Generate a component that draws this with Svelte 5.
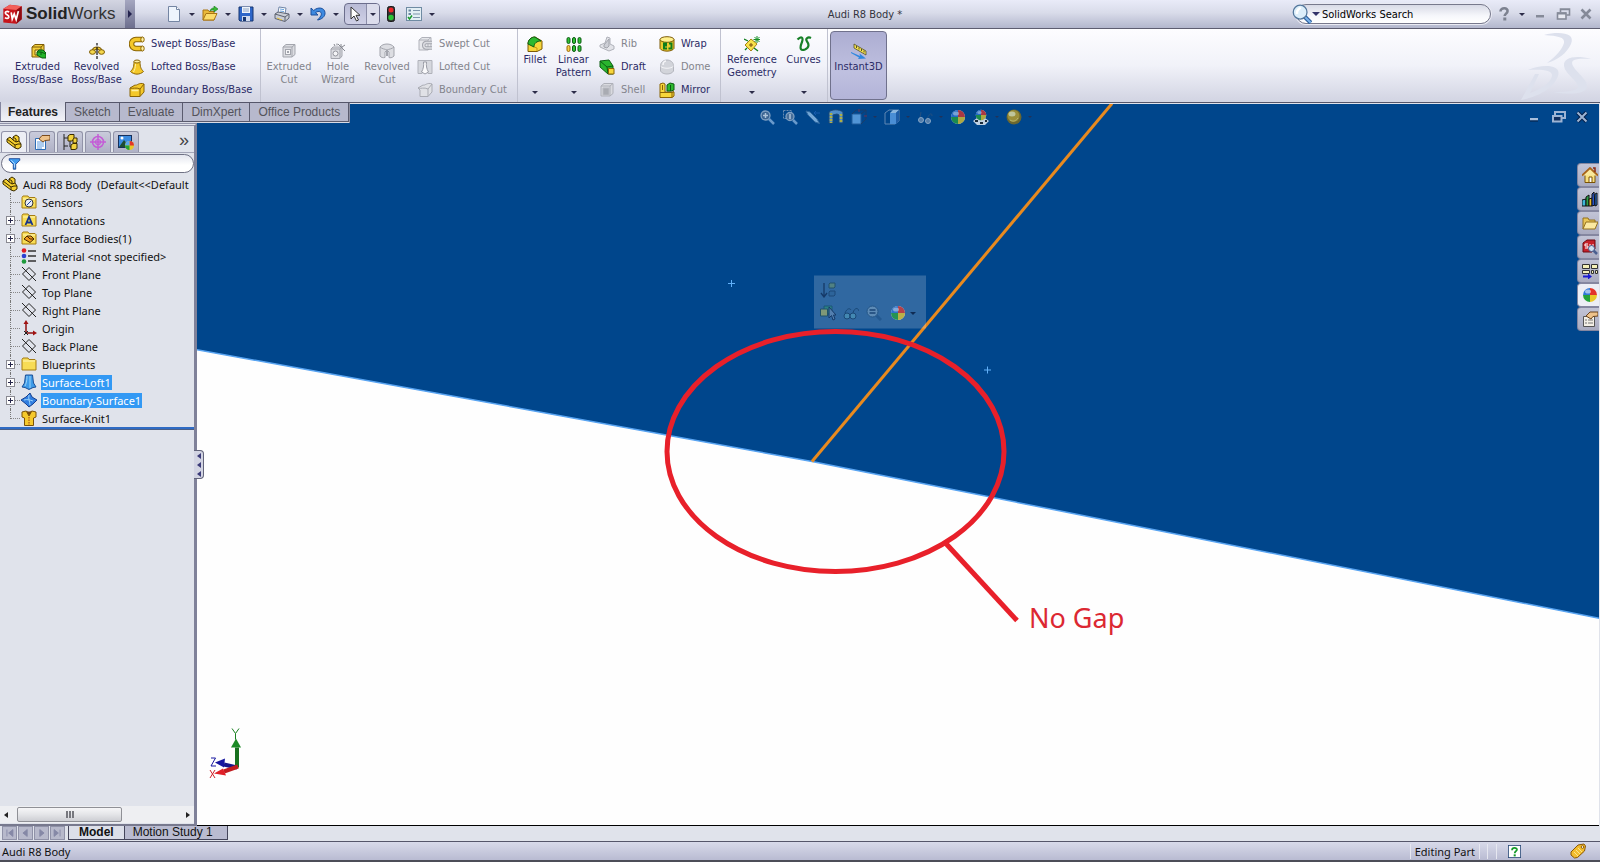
<script>
  const box = (f, s, g = '') =>
    `<path d="M2 4l3-2.500h9v10l-3 2.500H2z" fill="${f}" stroke="${s}"/><path d="M2 4h9v10M11 4l3-2.500" fill="none" stroke="${s}"/>${g}`;
  const ball =
    '<circle cx="8" cy="8" r="7" fill="#fff"/><path d="M8 8V1A7 7 0 0 0 1 8z" fill="#2f76d8"/><path d="M8 8V1A7 7 0 0 1 15 8z" fill="#e2342c"/><path d="M8 8H1A7 7 0 0 0 8 15z" fill="#23a23a"/><path d="M8 8H15A7 7 0 0 1 8 15z" fill="#e8c92a"/><ellipse cx="6" cy="4.500" rx="3" ry="2" fill="#fff" opacity=".55"/>';
  const folder =
    '<path d="M1 3.500L2 2h5l1 1.500h6l1 1V14H1z" fill="#f7dc55" stroke="#a57c12"/><path d="M2 5h12" stroke="#fff6b8"/>';
  const part =
    '<path d="M1 5l3-2 3 3V3l3-2 3 2v4l2 3v3l-3 2-3-1-8-6z" fill="#f5cf2e" stroke="#3a2c00"/><path d="M1 5l8 6 3-1 3 0M7 6l3 2 3-1M9 11v3M7 3l3 2v3" fill="none" stroke="#3a2c00"/>';
  const plane =
    '<path d="M1 1l14 14M8 1.500l6.500 6.500L8 14.500 1.500 8z" fill="none" stroke="#222"/>';

  const icons = {
    logo: '<path d="M1 4l5-3 9 1v10l-4 3.500-10-1z" fill="#c6141b"/><path d="M1 4l5-3 9 1-4 3z" fill="#f2605b"/><path d="M11 5l4-3v10l-4 3.500z" fill="#8e0b12"/><path d="M5.500 6.500c-2-1-3.500 0-2.700 1.200.6 1 2.700 1.300 2.400 2.800-.3 1.200-2 1-3 .3M7 6.800l.8 5L9.300 8l1.500 4.200 1.700-6.400" fill="none" stroke="#fff" stroke-width="1.300"/>',
    new: '<path d="M2.500.500h8l3 3v12h-11z" fill="#eef4fd" stroke="#7485a3"/><path d="M10.500.500v3h3" fill="#fff" stroke="#7485a3"/>',
    open: '<path d="M1 14V4h5l1 1.500h5V14z" fill="#e9b93a" stroke="#a97512"/><path d="M1 14l3-6.500h11L12 14z" fill="#fbdc6b" stroke="#a97512"/><path d="M8 5c1-3 3-3 4-3V0l4 3-4 3V4c-2 0-3 0-4 1z" fill="#38b835" stroke="#16791a" stroke-width=".6"/>',
    save: '<path d="M1 1h14v14H2l-1-1z" fill="#2d66c9" stroke="#17356f"/><path d="M4 1h8v6H4z" fill="#eef3fb"/><path d="M5 3h6M5 5h6" stroke="#8fa4c4"/><path d="M4 10h8v5H4z" fill="#cfdaee"/><path d="M5 11h3v4H5z" fill="#17356f"/>',
    print: '<path d="M4 7l1-6 7 1-1 6z" fill="#fff" stroke="#6f86a8"/><path d="M6 3l4 .6M6 5l4 .6" stroke="#6aa3de"/><path d="M1 8l3-2 11 2v4l-4 3.500-10-3z" fill="#c9cdd6" stroke="#5d6270"/><path d="M1 8l10 3 4-3M11 11v4" fill="none" stroke="#5d6270"/><path d="M3 12l5 2" stroke="#e8c23a"/>',
    undo: '<path d="M1 2v7h7L5.500 6.700C9 4 12.500 6 11 9.500c-.7 1.800-2 3-3.500 4.500 4-.5 8-3.500 7.500-7.500C14.500 1.500 8 .5 3.700 4.500z" fill="#3e8ae0" stroke="#1c4f9c"/>',
    cursor: '<path d="M4 1v12l3-3 2.500 5 2-1L9 9.300h4z" fill="#fff" stroke="#333"/>',
    traffic: '<rect x="4.500" y=".500" width="7" height="15" rx="2" fill="#333" stroke="#1b1b1b"/><circle cx="8" cy="4" r="2.500" fill="#f0262a"/><circle cx="8" cy="11.500" r="2.700" fill="#2bc434"/>',
    options: '<rect x=".500" y="1.500" width="15" height="13" fill="#e3eef4" stroke="#6f8ba3"/><path d="M7 4.500h7M7 8h7M7 11.500h7" stroke="#7d95ab"/><path d="M2.500 4.500h2.500M2.500 8h2.500" stroke="#6a86a0" stroke-width="2"/><path d="M2 11l1.500 2L6 9.500" fill="none" stroke="#1a9a2c" stroke-width="1.500"/>',
    help: '<path d="M4.500 5.500C4.500 1 12.500 1.500 11.500 5.500c-.4 2-2.800 2.500-2.800 4.500" fill="none" stroke="#7d8290" stroke-width="2.600"/><path d="M7.300 11.500h3v3h-3z" fill="#7d8290"/>',
    min: '<path d="M4 9h8v2.500H4z" fill="#858a98"/>',
    restore: '<path d="M5.500 6V3h9v6h-3M5 3.500h10" fill="none" stroke="#858a98" stroke-width="1.600"/><rect x="2.500" y="7" width="8.500" height="6" fill="#e8eaf2" stroke="#858a98" stroke-width="1.600"/><path d="M2 7.500h9" stroke="#858a98" stroke-width="2"/>',
    close: '<path d="M3.500 3.500l9 9M12.500 3.500l-9 9" stroke="#858a98" stroke-width="2.600"/>',
    vmin: '<path d="M4 9h8v2.500H4z" fill="#a9bedb"/><path d="M4 12h8" stroke="#071e42"/>',
    vrestore: '<path d="M5 6V3h10v6h-3" fill="none" stroke="#9db4d4" stroke-width="2"/><rect x="3" y="7" width="8.500" height="5.500" fill="#12305f" stroke="#9db4d4" stroke-width="2"/>',
    vclose: '<path d="M3.500 3.500l9 9M12.500 3.500l-9 9" stroke="#06204a" stroke-width="4"/><path d="M3.500 3.500l9 9M12.500 3.500l-9 9" stroke="#9db4d4" stroke-width="2"/>',
    mag: '<path d="M10 10l5 5" stroke="#2c5f9e" stroke-width="3.500"/><path d="M10 10l5 5" stroke="#7db4ea" stroke-width="1.500"/><circle cx="6.500" cy="6.500" r="5.500" fill="#dceefa" stroke="#53779c"/><path d="M4 8c-.5-3 1-4 3-5" stroke="#fff" stroke-width="2" fill="none"/>',

    extBoss: box('#f3cf3c', '#7c5b06', '<path d="M5 7h5v5H5z" fill="#fff2a0" stroke="#7c5b06"/><path d="M7 9l2-2h4l3 3v5h-4l-5-3z" fill="#22b428" stroke="#0c5c12"/><path d="M7 9h4l5 2M11 9v3" stroke="#0c5c12" fill="none"/>'),
    revBoss: '<path d="M8 0v2.500M8 13v3" stroke="#111" stroke-width="1.200"/><path d="M4 8C5 4 11 4 12 8" stroke="#7c5b06" stroke-width="3" fill="none"/><path d="M4 8C5 4 11 4 12 8" stroke="#f3cf3c" stroke-width="1.200" fill="none"/><ellipse cx="3.500" cy="9" rx="3" ry="2.300" fill="#f5d74c" stroke="#7c5b06"/><ellipse cx="12.500" cy="9" rx="3" ry="2.300" fill="#f5d74c" stroke="#7c5b06"/><path d="M8 4v8" stroke="#111" stroke-width="1.200"/>',
    swept: '<path d="M13.500 3.500H7a4.500 4.500 0 0 0 0 9h6.500" fill="none" stroke="#8a6405" stroke-width="5.500"/><path d="M13.500 3.500H7a4.500 4.500 0 0 0 0 9h6.500" fill="none" stroke="#f4c82a" stroke-width="3.500"/><ellipse cx="13.500" cy="3.500" rx="1.700" ry="2.500" fill="#fff0a0" stroke="#8a6405"/><ellipse cx="13.500" cy="12.500" rx="1.700" ry="2.500" fill="#fff0a0" stroke="#8a6405"/>',
    loft: '<path d="M5 2.500C5 8 4 10 1.500 12.500 5 16 11 16 14.500 12.500 12 10 11 8 11 2.500z" fill="#f4c82a" stroke="#8a6405"/><ellipse cx="8" cy="2.500" rx="3" ry="1.500" fill="#fff0a0" stroke="#8a6405"/><path d="M6.500 5c0 4-1 6-2 8" stroke="#fff0a0" fill="none"/>',
    boundary: '<path d="M1 6l5-3c2 1 4-3 9-1v8l-4 4.500H1z" fill="#f4c82a" stroke="#8a6405"/><path d="M1 6c3 1 6-1 10 1l4-5M11 7v7.500" fill="none" stroke="#8a6405"/><path d="M2.500 8.500h7" stroke="#fff0a0" stroke-width="1.500"/>',
    extCut: box('#dcdde2', '#a3a5ad', '<rect x="4.500" y="6.500" width="5" height="5" fill="#f6f6f8" stroke="#a3a5ad"/><path d="M6 8h2v2H6z" fill="#a3a5ad"/>'),
    hole: '<path d="M1 6l2-2h9v9l-2 2.500H1z" fill="#dcdde2" stroke="#a3a5ad"/><path d="M1 6h9v9M10 6l2-2" fill="none" stroke="#a3a5ad"/><circle cx="5.500" cy="10.500" r="2.500" fill="#f4f4f6" stroke="#93959d"/><path d="M8 1l7 7M11 1v3M15 2l-3 2M4 1l1 2M7 .5v2" stroke="#85878f"/>',
    revCut: '<path d="M1 4c3-4 11-4 14 0v9c-2 2-4 2-5 1.500V9L8 7 6 9v5.500c-2 .5-4 0-5-1.500z" fill="#dcdde2" stroke="#a3a5ad"/><path d="M1 4c2 2 5 2 7 3 2-1 5-1 7-3" fill="none" stroke="#a3a5ad"/><path d="M8 7v6" stroke="#a3a5ad" stroke-width="2"/>',
    sweptCut: box('#e6e7eb', '#b0b2ba', '<path d="M15 6.500H9a2.800 2.800 0 0 0 0 5.500h6" fill="none" stroke="#a3a5ad" stroke-width="3.500"/><path d="M15 6.500H9a2.800 2.800 0 0 0 0 5.500h6" fill="none" stroke="#dcdde2" stroke-width="1.500"/>'),
    loftCut: '<path d="M1 1.500h14v13h-4c-1-2-2-5-3-9-1 4-2 7-3 9H1z" fill="#d6d8de" stroke="#b0b2ba"/><path d="M4.500 13c2-3 2.500-7 2-10h3c-.5 3 0 7 2 10L8 15z" fill="#fafafc" stroke="#9b9da6"/>',
    boundCut: '<path d="M1 6l5-3c2 1 4-3 9-1v8l-4 4.500H3V8z" fill="#e0e1e6" stroke="#a9abb3"/><path d="M1 6c3 1 6-1 10 1l4-5M11 7v7.500" fill="none" stroke="#a9abb3"/>',
    fillet: '<path d="M1 8c0-4 3-7 7-7l7 4v8l-5 2.500H1z" fill="#f6d63b" stroke="#7c5b06"/><path d="M1 8c0-4 3-7 7-7l6 4c-4 0-7 2-7 6z" fill="#2cb92f" stroke="#0c5c12"/><path d="M7 11l3 1v3" stroke="#c79a10" fill="none"/>',
    pattern: [1, 6.5, 12].map((x) => `<rect x="${x}" y="1.500" width="3" height="6" rx="1.500" fill="#2fc135" stroke="#0c5c12"/><rect x="${x}" y="9.500" width="3" height="6" rx="1.500" fill="${x === 1 ? '#f5cf4a' : '#2fc135'}" stroke="${x === 1 ? '#9c6a08' : '#0c5c12'}"/>`).join(''),
    rib: '<path d="M1 9l5-2 2-6 3 1v6l4 2v3l-5 2-9-4z" fill="#e2e3e8" stroke="#b0b2ba"/><path d="M5 11V9l5-6v7l-2 2z" fill="#cdcfd6" stroke="#a3a5ad"/>',
    draft: '<path d="M1 2l9-1 4 6v8H9L1 8z" fill="#29b52d" stroke="#0c5c12"/><path d="M1 2l7 6 6-1M8 8l1 7" stroke="#0c5c12" fill="none"/><path d="M9.500 9.500h5.500V15H9.500z" fill="#f6d63b" stroke="#8a6405"/>',
    shell: box('#d9dadf', '#aeb0b8', '<path d="M4 6h6v7H4z" fill="#a9abb2" stroke="#b9bbc2"/>'),
    wrap: '<path d="M1 3.500v9c2 3.500 12 3.500 14 0v-9z" fill="#eccb2f" stroke="#7c5b06"/><ellipse cx="8" cy="3.500" rx="7" ry="2.800" fill="#fff08c" stroke="#7c5b06"/><path d="M4 7.500h3v2H5v3h3M10 7.500h2.500v5H9.500" stroke="#0f7d1c" stroke-width="2" fill="none"/>',
    dome: '<path d="M1.500 7C1.500-1 14.500-1 14.500 7v5c-2 4-11 4-13 0z" fill="#d2d4da" stroke="#b4b6be"/><path d="M1.500 7c2 3 11 3 13 0" fill="none" stroke="#f5f5f8"/><path d="M4 6c0-3 2-4 3-4" stroke="#f5f5f8" stroke-width="1.500" fill="none"/>',
    mirror: '<path d="M1 2l3-1 2 1v8h9v4l-2 1.500H1z" fill="#f6d63b" stroke="#8a6405"/><path d="M8 3l3-2 4 1v6l-3 1H8z" fill="#2cb92f" stroke="#0c5c12"/><path d="M1 10.500h12l2-1M13 10.500v5M3.500 3v5" stroke="#8a6405" fill="none"/><path d="M11.500 3v6" stroke="#0c5c12"/>',
    refGeo: '<path d="M1 9l6-6 6 5-6 7z" fill="#f8e24a" stroke="#a98212"/><path d="M5 9h4M7 7v4" stroke="#7a4c10"/><path d="M0 3l4 2M10 12l4 3M1 14l2-2" stroke="#0f7d1c" stroke-width="1.300"/><path d="M13 0v7M9.500 3.500h6.500M10.500 1l5 5M15.500 1l-5 5" stroke="#169025"/>',
    curves: '<path d="M1.500 3.500c4-4 6-2 4.500 2.500-3 7-1 9 3 7.500 4.500-2 4-5.500 2-8C9 2.500 12 .5 15 2" fill="none" stroke="#178027" stroke-width="2.200"/>',
    instant: '<path d="M3 1l12 7v4L3 5z" fill="#f6e34c" stroke="#55502a" stroke-width=".8"/><path d="M5.500 3v2M8 4.500v2M10.500 6v2M13 7.500v2" stroke="#55502a"/><path d="M0 9l9 4-.5-2.500 6.500 5-8 .5 1-1.500L0 10z" fill="#2f87e0"/>',

    part,
    prop: '<path d="M1.500 4.500h10v11h-10z" fill="#fff" stroke="#2d6cb5"/><path d="M3 8h7M3 10h7M3 12h7M3 14h5" stroke="#5c9ae0"/><path d="M5 5l3-3.500h8V6l-5 .5-2 1.500z" fill="#eec28a" stroke="#7a4b1e"/>',
    config: '<path d="M2 0v16M2 4h4M2 12h4M8 5v8h2" fill="none" stroke="#222"/><path d="M6 2l2-1.500h4v5L10 7H6z" fill="#f2d23e" stroke="#3a2c00"/><path d="M11 5l1.500-1H15v4l-1 1h-3z" fill="#f2d23e" stroke="#3a2c00"/><path d="M9 11l2-1.500h4v5l-2 1H9z" fill="#f2d23e" stroke="#3a2c00"/>',
    target: '<circle cx="8" cy="8" r="5.500" fill="none" stroke="#c45cd6" stroke-width="1.500"/><circle cx="8" cy="8" r="2.500" fill="none" stroke="#c45cd6" stroke-width="1.200"/><path d="M8 0v16M0 8h16" stroke="#c45cd6" stroke-width="1.500"/>',
    display: '<rect x=".500" y="1.500" width="13" height="12" fill="#3b8be0" stroke="#17305c"/><path d="M1 13l5-7 6 7z" fill="#1e4d33"/><circle cx="4" cy="4" r="1.500" fill="#fff"/><circle cx="11.500" cy="11.500" r="4.500" fill="#e8c92a"/><path d="M11.500 11.500V7a4.500 4.500 0 0 1 4.500 4.500z" fill="#e2342c"/><path d="M11.500 11.500V7A4.500 4.500 0 0 0 7 11.500z" fill="#58a7f0"/><path d="M11.500 11.500V16A4.500 4.500 0 0 1 7 11.500z" fill="#23a23a"/>',
    filter: '<path d="M1.500 2h13v2l-5 5v6h-3V9l-5-5z" fill="#3f9bf0" stroke="#123f8e"/><path d="M4 4l4 4v5" stroke="#c8e6ff" fill="none"/>',
    sensor: folder + '<circle cx="8" cy="9" r="4" fill="#e9eef8" stroke="#333"/><path d="M6 11l4-4" stroke="#1c3ea0"/>',
    annot: folder + '<path d="M4.500 13L8 5l3.500 8M5.800 10.500h4.500" stroke="#16348c" stroke-width="1.800" fill="none"/>',
    surf: folder + '<path d="M3 9l3-3h4l3 3-4 3.500z" fill="#f09a1e" stroke="#4a2a00"/><path d="M6 6l3 3 4 0" stroke="#4a2a00" fill="none"/>',
    material: '<circle cx="3" cy="2.500" r="2.300" fill="#e01c24"/><circle cx="3" cy="8" r="2.300" fill="#2c3fd0"/><circle cx="3" cy="13.500" r="2.300" fill="#1e9a3c"/><path d="M7 3h8M7 8h8M7 13h8" stroke="#333" stroke-width="1.500"/>',
    plane,
    origin: '<path d="M5 13V3M5 13h8" stroke="#8f1010" stroke-width="1.500"/><path d="M5 0l2.500 4h-5zM16 13l-4-2.500v5z" fill="#a01212"/><path d="M3 11l4 4M7 11l-4 4" stroke="#222"/>',
    folder,
    loftS: '<path d="M4.500 1h7l1 8 2.500 4-3 .5-4 2-4-2-3-.5L3.500 9z" fill="#3e9be8" stroke="#1b4f96"/><path d="M6 2c0 5-1 8-2 10M9 2v12" stroke="#9bd4fa" fill="none"/>',
    boundS: '<path d="M0 8l5-3 4-4 2 4 5 3-4 4-4 3-3-3z" fill="#2f7de0" stroke="#17408e"/><path d="M3 8c3-1 6 0 9 1M8 3c-1 4 1 7 1 10" stroke="#9bd4fa" fill="none"/>',
    knit: '<path d="M1 2l4-1 3 2 3-2 4 1v5l-2.500 1v7.500h-9V8L1 7z" fill="#f5c92c" stroke="#7a5206"/><path d="M5.500 1.500L8 6l2.500-4.500" fill="#7a4a10" stroke="#7a5206"/><path d="M8 7v8" stroke="#a03a10" stroke-dasharray="1.500 1"/>',

    hMag: '<path d="M10 10l5 5" stroke="#8db6e0" stroke-width="2.500"/><circle cx="6.500" cy="6.500" r="4.500" fill="#4f6f94" stroke="#a9bdd4" stroke-width="1.300"/><path d="M4 6.500h5M6.500 4v5" stroke="#e6edf5" stroke-width="1.500"/>',
    hArea: '<path d="M1.500 1.500h8v8h-8z" fill="none" stroke="#8aa3c0" stroke-dasharray="2 1"/><path d="M11 11l4 4" stroke="#8db6e0" stroke-width="2.500"/><circle cx="8" cy="7.500" r="4" fill="#5f7c9e" stroke="#a9bdd4" stroke-width="1.300"/><path d="M8 5v5" stroke="#e6edf5" stroke-width="1.500"/>',
    hPrev: '<path d="M1 2l4 1 7 7 2.500 4.500L10 13 3 6z" fill="#9cc9f0" stroke="#3f74a8"/><path d="M9 4h6M9 4l2-2M9 4l2 2" stroke="#1f62b8"/>',
    hSect: '<path d="M1 3c3-3 10-3 14 0v11h-4V6L9 5 5 6v8H1z" fill="#6aa5de" stroke="#24496f"/><path d="M3 4v10M13 5v9" stroke="#e8d22c" stroke-width="2.500" stroke-dasharray="2 1"/>',
    hView: '<path d="M1 5h9v10H1z" fill="#6db0ef" stroke="#2a62a0"/><path d="M1 5l4-4h10v9l-5 5M10 5l5-4" fill="none" stroke="#253a5c"/><path d="M8 0v3M13 7h3" stroke="#8c2a4a"/>',
    hDisp: '<path d="M1 4l4-3h10v11l-4 3H1z" fill="none" stroke="#7f9cc0"/><path d="M6 4h6v11H6z" fill="#63a7ee"/><path d="M6 4l3-3h6l-3 3z" fill="#b9dcfa"/><path d="M12 4l3-3v11l-3 3z" fill="#2a67b2"/>',
    hGlass: '<path d="M3 9l1-6M10 10c2-5 5-7 5-3" fill="none" stroke="#33557d"/><circle cx="4" cy="11" r="2.500" fill="#6f8fb4" stroke="#b2c6dc"/><circle cx="11" cy="12" r="2.500" fill="#6f8fb4" stroke="#b2c6dc"/>',
    ball,
    hScene: '<path d="M0 12l4-3h8l4 3-4 4H4z" fill="#fff"/><path d="M2 11h3v2H2zM7 13h3v2H7zM12 11h2v2h-2z" fill="#222"/><g transform="translate(2 0) scale(.75)">' + ball + '</g>',
    hGold: '<circle cx="8" cy="8" r="7.500" fill="#8f7312"/><circle cx="7.500" cy="7" r="6" fill="#cfa71e"/><ellipse cx="6" cy="5" rx="3.500" ry="2.500" fill="#fff0a0"/><path d="M4 11c3 2 6 1 8-2" stroke="#f2d96a" fill="none"/>',
    sort: '<path d="M4 1v13M1 11l3 4 3-4" fill="none" stroke="#0d2a55" stroke-width="1.300"/><path d="M9 2l1-1h5v4l-1 1H9z" fill="#5c8a78" stroke="#1f4a5c"/><path d="M9 10l1-1h5v4l-1 1H9z" fill="#2c6398" stroke="#173f6c"/>',
    pick: '<path d="M4 1h8v8H4z" fill="#2a8a78" stroke="#14506a"/><path d="M.5 4h7v7h-7z" fill="#9aa86a" stroke="#1a4a5a"/><path d="M9 2v11l2.500-2.500L13 15l2-1-1.500-4H16z" fill="#5f87b4" stroke="#0d2a55"/>',
    glasses: '<circle cx="4" cy="11" r="3" fill="#4a93b8" stroke="#133f6a"/><circle cx="10" cy="11" r="3" fill="#4a93b8" stroke="#133f6a"/><path d="M2 8c2-5 5-5 6-3M10 8c1-5 5-6 6-2" fill="none" stroke="#133f6a"/>',
    magSel: '<path d="M10 10l5 5" stroke="#1f548c" stroke-width="3"/><circle cx="6.500" cy="6.500" r="5.500" fill="#6c97bd" stroke="#1f4f80"/><path d="M3.500 5h6M3.500 8h6" stroke="#133a68" stroke-width="1.300"/>',

    home: '<path d="M3 8v7.500h10V8" fill="#f7df7c" stroke="#7a5206"/><path d="M0 8.500L8 1l8 7.500" fill="#f9e89c" stroke="#a8641a" stroke-width="1.800"/><path d="M11 1h2v4" fill="none" stroke="#8a2a12" stroke-width="1.500"/><path d="M7 10h3v5.500H7z" fill="#fff" stroke="#7a5206"/>',
    library: '<path d="M0 9l4-1v7H0z" fill="#3fb6d8" stroke="#111"/><path d="M4 6l3-2v11H4z" fill="#2fa044" stroke="#111"/><path d="M7 8l3-1v8H7z" fill="#e8b92a" stroke="#111"/><path d="M10 3l2-2 1 13-3 1z" fill="#2a54c8" stroke="#111"/><path d="M13 3l2-1v12l-2 1z" fill="#2f7de0" stroke="#111"/>',
    openF: '<path d="M1 14V3h5l1 2h6v2" fill="#e9c657" stroke="#94701c"/><path d="M1 14l3-7h12l-3 7z" fill="#fbe9a0" stroke="#94701c"/>',
    swSearch: '<path d="M1 4l4-3h8v9l-3 3H1z" fill="#c6202a" stroke="#6d0b12"/><path d="M3 9h3V7H3V5h3M8 5v4h3V5" fill="none" stroke="#fff"/><path d="M11 11l4 4" stroke="#4a5f90" stroke-width="2.500"/><circle cx="9.500" cy="9.500" r="3" fill="#cfe0f2" stroke="#4a5f90"/>',
    palette: '<path d="M.5 1.500h7v4h-7zM9.500 1.500h6v4h-6zM.5 7.500h7v3h-7zM9.500 7.500h2v3h-2zM13.500 7.500h2v3h-2z" fill="#f4f0b8" stroke="#333"/><path d="M1 13.500h6" stroke="#1a1ad0" stroke-width="2"/><path d="M6 10.500l4 3-4 3z" fill="#1a1ad0"/>',
    custom: '<path d="M1.500 5.500h11v10h-11z" fill="#f3efe6" stroke="#555"/><path d="M3 9h2M6 9h5M3 12h2M6 12h5" stroke="#777"/><path d="M4 5l4-4h8v4l-5 .5L9 8z" fill="#eec28a" stroke="#6b431c"/>',
    qhelp: '<rect x=".500" y=".500" width="15" height="15" fill="#fff" stroke="#2a4a78"/><path d="M5 6.500C5 2.500 11.500 3 11 6c-.3 1.500-2.700 1.800-2.700 4" fill="none" stroke="#149a28" stroke-width="2.200"/><path d="M7 11.500h2.500V14H7z" fill="#149a28"/>',
    tag: '<path d="M1 9l7-7 6-1 1.500 2-1 5-7 6.500-3 .5-3.500-3z" fill="#f3bd2e" stroke="#8a5806"/><circle cx="12.500" cy="4" r="1.300" fill="#fff" stroke="#8a5806"/><path d="M4 9l4 4M6 7l4 4M8 5l4 4" stroke="#fbe58c"/>',
    dss: '<g fill="#dde1ed"><path d="M24 4C40 0 56 2 51 13C47 22 38 29 27 32C36 25 42 19 44 12C45 6 38 5 24 4z"/><path d="M8 39C22 33 42 33 38 45C34 57 18 66 1 69L15 43L19 43L10 62C22 58 31 51 32 45C33 39 22 38 8 39z"/><path d="M71 28C54 27 50 29 53 35C57 42 68 49 67 56C66 63 50 64 33 61C46 61 57 60 58 56C58 50 45 43 44 35C43 26 56 24 71 28z"/></g>'
  };

  const quick = [
    { i: 'new', t: 'New' }, { i: 'open', t: 'Open' }, { i: 'save', t: 'Save' },
    { i: 'print', t: 'Print' }, { i: 'undo', t: 'Undo' }
  ];
  const ribbon = [
    [
      { i: 'extBoss', l: ['Extruded', 'Boss/Base'], w: 59 },
      { i: 'revBoss', l: ['Revolved', 'Boss/Base'], w: 59 },
      { w: 132, rows: [['swept', 'Swept Boss/Base'], ['loft', 'Lofted Boss/Base'], ['boundary', 'Boundary Boss/Base']] }
    ],
    [
      { i: 'extCut', l: ['Extruded', 'Cut'], w: 54, off: true },
      { i: 'hole', l: ['Hole', 'Wizard'], w: 44, off: true },
      { i: 'revCut', l: ['Revolved', 'Cut'], w: 54, off: true },
      { w: 101, rows: [['sweptCut', 'Swept Cut', 1], ['loftCut', 'Lofted Cut', 1], ['boundCut', 'Boundary Cut', 1]] }
    ],
    [
      { i: 'fillet', l: ['Fillet'], w: 32, drop: true },
      { i: 'pattern', l: ['Linear', 'Pattern'], w: 45, drop: true },
      { w: 60, rows: [['rib', 'Rib', 1], ['draft', 'Draft'], ['shell', 'Shell', 1]] },
      { w: 62, rows: [['wrap', 'Wrap'], ['dome', 'Dome', 1], ['mirror', 'Mirror']] }
    ],
    [
      { i: 'refGeo', l: ['Reference', 'Geometry'], w: 60, drop: true },
      { i: 'curves', l: ['Curves'], w: 43, drop: true }
    ]
  ];
  const tabs = ['Features', 'Sketch', 'Evaluate', 'DimXpert', 'Office Products'];
  const panelTabs = [['part', 'FeatureManager'], ['prop', 'PropertyManager'], ['config', 'ConfigurationManager'], ['target', 'DimXpertManager'], ['display', 'DisplayManager']];
  const tree = [
    { i: 'sensor', t: 'Sensors' }, { i: 'annot', t: 'Annotations', plus: true },
    { i: 'surf', t: 'Surface Bodies(1)', plus: true }, { i: 'material', t: 'Material <not specified>' },
    { i: 'plane', t: 'Front Plane' }, { i: 'plane', t: 'Top Plane' }, { i: 'plane', t: 'Right Plane' },
    { i: 'origin', t: 'Origin' }, { i: 'plane', t: 'Back Plane' },
    { i: 'folder', t: 'Blueprints', plus: true }, { i: 'loftS', t: 'Surface-Loft1', plus: true, sel: true },
    { i: 'boundS', t: 'Boundary-Surface1', plus: true, sel: true }, { i: 'knit', t: 'Surface-Knit1' }
  ];
  const hud = [['hMag'], ['hArea'], ['hPrev'], ['hSect'], ['hView', 1], ['hDisp', 1], ['hGlass', 1], ['ball'], ['hScene', 1], ['hGold', 1]];
  const pane = ['home', 'library', 'openF', 'swSearch', 'palette', 'ball', 'custom'];
  const nav = ['M4 3v8M11 3L6 7l5 4z', 'M9 3L4 7l5 4z', 'M5 3l5 4-5 4z', 'M10 3v8M3 3l5 4-5 4z'];
  let tab = $state('Features');
</script>

{#snippet icon(name)}
  <svg class="icon" viewBox="0 0 16 16" aria-hidden="true">{@html icons[name]}</svg>
{/snippet}

<div class="app">
  <header class="title">
    <div class="brand">
      <svg class="logo" viewBox="0 0 16 16" aria-hidden="true">{@html icons.logo}</svg>
      <span class="name"><b>Solid</b>Works</span>
    </div>
    <button class="expand" aria-label="Show menus"><i class="tri-r"></i></button>
    <div class="quick">
      {#each quick as q}
        <button class="q" aria-label={q.t}>{@render icon(q.i)}<i class="tri"></i></button>
      {/each}
      <button class="q picked" aria-label="Select">{@render icon('cursor')}<span class="split"><i class="tri"></i></span></button>
      <button class="light" aria-label="Rebuild">{@render icon('traffic')}</button>
      <button class="q" aria-label="Options">{@render icon('options')}<i class="tri"></i></button>
    </div>
    <h1>Audi R8 Body *</h1>
    <label class="search">
      {@render icon('mag')}<i class="tri"></i>
      <input aria-label="SolidWorks Search" value="SolidWorks Search" />
    </label>
    <div class="winbtns">
      <button aria-label="Help">{@render icon('help')}</button>
      <button aria-label="Help menu"><i class="tri"></i></button>
      <button aria-label="Minimize">{@render icon('min')}</button>
      <button aria-label="Restore">{@render icon('restore')}</button>
      <button aria-label="Close">{@render icon('close')}</button>
    </div>
  </header>

  <section class="ribbon">
    {#each ribbon as group}
      <div class="group">
        {#each group as c}
          {#if c.rows}
            <div class="col" style:width="{c.w}px">
              {#each c.rows as [i, t, off]}
                <button class="small" disabled={!!off}>{@render icon(i)}<span>{t}</span></button>
              {/each}
            </div>
          {:else}
            <button class="big" class:drop={c.drop} disabled={c.off} style:width="{c.w}px">
              {@render icon(c.i)}
              <span class="lines">{#each c.l as l}<span>{l}</span>{/each}</span>
              {#if c.drop}<i class="tri"></i>{/if}
            </button>
          {/if}
        {/each}
      </div>
    {/each}
    <button class="big instant">{@render icon('instant')}<span class="lines">Instant3D</span></button>
    <svg class="dss" viewBox="0 0 74 70" aria-hidden="true">{@html icons.dss}</svg>
  </section>

  <main>
    <div class="view">
      <svg class="scene" viewBox="197 104 1402 722" preserveAspectRatio="xMidYMid slice" aria-label="Model view">
        <path d="M0 0H1700V639L1600 619L812 462L196 350L0 314z" fill="#00468c" />
        <path d="M0 314L196 350L812 462L1600 619L1700 639" fill="none" stroke="#58a4f2" stroke-width="1.500" />
        <path d="M1112 104L812 462" stroke="#e98a1e" stroke-width="3" />
        <path d="M728 284h7M731.500 280.500v7M984 370.500h7M987.500 367v7" stroke="#62b0f8" />
        <rect x="814" y="276" width="112" height="53" fill="#fff" opacity=".19" />
        <ellipse cx="835.500" cy="452" rx="168.500" ry="120" fill="none" stroke="#e8202a" stroke-width="5" />
        <path d="M945 543L1017 621" stroke="#e8202a" stroke-width="5" />
        <text x="1029" y="628" class="note">No Gap</text>
        <g stroke-width="4">
          <path d="M237 768L224 765" stroke="#16168a" />
          <path d="M237 768V748" stroke="#18701f" />
          <path d="M238 767L224 772" stroke="#c01c20" />
        </g>
        <path d="M236 739l5 9h-10z" fill="#1c8a26" />
        <path d="M215 763l10-4-1 9z" fill="#1616a0" />
        <path d="M214 774l9-5 3 7z" fill="#e02028" />
        <g fill="none" stroke-width="1">
          <path d="M232 729l3.500 5 3.500-5M235.500 734v6" stroke="#18801f" />
          <path d="M211 758.500h4.500l-4.500 8h5" stroke="#1616a0" />
          <path d="M210 770.500l5 8M215 770.500l-5 8" stroke="#d02028" />
        </g>
      </svg>
      <div class="hud">
        {#each hud as [i, d]}
          <button class:has={d} aria-label={i}>{@render icon(i)}{#if d}<i class="tri"></i>{/if}</button>
        {/each}
      </div>
      <div class="docbtns">
        <button aria-label="Minimize document">{@render icon('vmin')}</button>
        <button aria-label="Restore document">{@render icon('vrestore')}</button>
        <button aria-label="Close document">{@render icon('vclose')}</button>
      </div>
      <div class="context">
        <div>{@render icon('sort')}</div>
        <div>{@render icon('pick')}{@render icon('glasses')}{@render icon('magSel')}{@render icon('ball')}<i class="tri"></i></div>
      </div>
      <div class="pane">
        {#each pane as p}
          <button class:on={p === 'ball'} aria-label={p}>{@render icon(p)}</button>
        {/each}
      </div>
    </div>

    <nav class="tabs">
      {#each tabs as t}
        <button class:on={tab === t} onclick={() => (tab = t)}>{t}</button>
      {/each}
    </nav>

    <aside>
      <div class="ptabs">
        {#each panelTabs as [i, t], n}
          <button class:on={n === 0} aria-label={t}>{@render icon(i)}</button>
        {/each}
        <button class="more" aria-label="More">»</button>
      </div>
      <label class="filter">{@render icon('filter')}<input aria-label="Filter" /></label>
      <div class="root">{@render icon('part')}<span>Audi R8 Body&nbsp; (Default&lt;&lt;Default</span></div>
      <ul>
        {#each tree as n}
          <li><span class="stem">{#if n.plus}<i class="plus"></i>{/if}</span>{@render icon(n.i)}<span class="txt" class:sel={n.sel}>{n.t}</span></li>
        {/each}
      </ul>
      <div class="rollback"></div>
      <div class="scroll">
        <i class="arr l"></i><span class="thumb"><i></i><i></i><i></i></span><i class="arr r"></i>
      </div>
      <button class="handle" aria-label="Collapse panel"><i></i><i></i><i></i></button>
    </aside>
  </main>

  <div class="sheets">
    {#each nav as d}
      <button class="nav" aria-label="Scroll tabs"><svg viewBox="0 0 14 14"><path {d} fill="#8588a6" stroke="#8588a6" /></svg></button>
    {/each}
    <button class="sheet on">Model</button>
    <button class="sheet">Motion Study 1</button>
  </div>

  <footer>
    <span class="doc">Audi R8 Body</span>
    <span class="cell">Editing Part</span>
    <span class="cell gap"></span>
    <button class="qh" aria-label="Quick tips">{@render icon('qhelp')}</button>
    <button class="tg" aria-label="Tags">{@render icon('tag')}</button>
  </footer>
</div>

<style>
  :global(body) { margin: 0; }
  .app {
    min-height: 100vh; display: grid; grid-template-rows: 29px 74px 1fr 15px 21px;
    font: 11px/13px "DejaVu Sans Condensed", "Noto Sans", sans-serif; color: #111; background: #e0e3eb;
    overflow: hidden; box-sizing: border-box;
  }
  .app :global(*) { box-sizing: border-box; }
  button { font: inherit; color: inherit; border: 0; padding: 0; margin: 0; background: none; display: flex; align-items: center; }
  .icon { width: 16px; height: 16px; flex: none; display: block; }
  .tri { width: 0; height: 0; flex: none; border: 3px solid transparent; border-top-color: #2c2c48; border-bottom: 0; }
  .tri-r { border: 4px solid transparent; border-left-color: #23234e; border-right: 0; }

  .title { display: flex; align-items: center; background: linear-gradient(#e9ebf8, #d9dcea 45%, #b3b7cd); border-bottom: 1px solid #5d5d70; }
  .brand { width: 125px; align-self: stretch; display: flex; align-items: center; padding-left: 2px; gap: 3px; background: linear-gradient(#d3d5e2, #b9bccd 60%, #9da0b4); }
  .logo { width: 21px; height: 24px; flex: none; }
  .name { font: 17px/24px "Liberation Sans", sans-serif; color: #333; }
  .name b { color: #222; }
  .expand { width: 10px; align-self: stretch; justify-content: center; background: linear-gradient(#a5a7c0, #6d6f8e); }
  .quick { display: flex; align-items: center; padding-left: 31px; }
  .q { gap: 7px; width: 36px; }
  .q.picked { height: 22px; width: 36px; margin: 0 3px 0 -2px; gap: 3px; padding-left: 2px; border: 1px solid #6c6e8c; border-radius: 4px; background: linear-gradient(#b9bbd6, #cfd0e6); }
  .split { align-self: stretch; display: flex; align-items: center; padding-left: 3px; width: 13px; border-left: 1px solid #8b8da8; background: #dcddec; border-radius: 0 3px 3px 0; }
  .light { margin-right: 7px; }
  h1 { flex: 1; margin: 0; padding-right: 8px; font: inherit; text-align: center; color: #33333d; }
  .search { display: flex; align-items: center; gap: 1px; width: 195px; height: 20px; margin-right: 5px; border: 1px solid #77798c; border-radius: 10px; background: linear-gradient(#d8dae6, #f6f7fb 60%, #fff); box-shadow: 0 0 0 1px #e9eaf3; }
  .search .icon { width: 20px; height: 20px; margin-left: -5px; }
  .search .tri { border-width: 4px 4px 0; border-top-color: #33336a; margin-left: -1px; }
  input { border: 0; background: none; font: inherit; color: #000; padding: 0; min-width: 0; flex: 1; outline: 0; }
  .search input { padding-left: 1px; }
  .winbtns { display: flex; align-items: center; gap: 7px; padding-right: 6px; }

  .ribbon { display: flex; background: linear-gradient(#fdfdff, #f1f2f9 50%, #d4d6e4 96%); border-bottom: 1px solid #55566a; padding-left: 8px; color: #2b2b66; }
  .group { display: flex; padding-right: 2px; margin-right: 1px; border-right: 1px solid #c0c2d0; }
  .col { display: grid; grid-template-rows: repeat(3, 23px); padding: 3px 0 0 3px; }
  .small { gap: 6px; white-space: nowrap; }
  .small:disabled, .big:disabled { color: #83848c; }
  .big { flex-direction: column; padding-top: 14px; gap: 1px; }
  .lines { display: flex; flex-direction: column; align-items: center; white-space: nowrap; }
  .big.drop { padding-top: 7px; }
  .drop .tri { margin: auto 0 8px; }
  .instant { width: 57px; height: 69px; margin: 2px 0 0 1px; padding-top: 11px; border: 1px solid #70718c; border-radius: 4px; background: linear-gradient(#adaed2, #bfc0e0 60%, #b3b4d8); }
  .dss { width: 74px; height: 70px; margin: 2px 6px 0 auto; }

  main { display: grid; grid-template: 20px 1fr / 197px 1fr; min-height: 0; }
  .view { grid-area: 1 / 2 / 3 / 3; position: relative; background: #fefefe; margin: 1px 1px 0 0; border-bottom: 1px solid #000; overflow: hidden; min-height: 400px; }
  .scene { position: absolute; inset: 0; width: 100%; height: 100%; }
  .note { font: 27px "Noto Sans", sans-serif; fill: #dc2832; }
  .hud { position: absolute; top: 5px; left: 0; right: 6px; display: flex; justify-content: center; gap: 7px; opacity: .75; }
  .hud .has { gap: 6px; width: 26px; }
  .hud .tri { border-width: 2px 2px 0; }
  .docbtns { position: absolute; top: 5px; right: 9px; display: flex; gap: 8px; }
  .context { position: absolute; left: 623px; top: 178px; display: grid; gap: 7px; }
  .context div { display: flex; align-items: center; gap: 7px; opacity: .75; }
  .context .icon:nth-child(3) { margin-right: 1px; }
  .context .tri { margin-left: -3px; border-top-color: #04183c; }
  .pane { position: absolute; right: 0; top: 59px; width: 22px; display: grid; }
  .pane button { height: 24px; padding-left: 4px; background: linear-gradient(#c2c4d6, #a9abc0); border: 1px solid #8587a0; border-width: 1px 0 1px 1px; border-radius: 4px 0 0 4px; }
  .pane .on { background: #eceef5; }

  .tabs { grid-area: 1 / 1 / 2 / 3; justify-self: start; z-index: 1; display: flex; border-bottom: 1px solid #d9dbe6; box-shadow: 1px 0 #8e90a2; font: 12px/14px "Liberation Sans", sans-serif; color: #53535b; }
  .tabs button { height: 19px; padding: 0 8px; background: #b7b9cd; border: solid #5a5b6e; border-width: 0 1px 1px 0; }
  .tabs .on { background: linear-gradient(#d6d8e5, #f2f3f8); color: #222; font-weight: bold; margin-top: -1px; height: 20px; padding: 0 7px; border-left: 1px solid #8486a0; }

  aside { grid-area: 2 / 1 / 3 / 2; position: relative; display: flex; flex-direction: column; background: #e0e3eb; border-right: 3px solid #7f8199; border-top: 3px double #9092a8; border-bottom: 2px solid #77798e; white-space: nowrap; font-family: "Noto Sans", sans-serif; }
  .ptabs { display: flex; gap: 2px; padding: 5px 5px 0 1px; border-bottom: 1px solid #a4a6b8; }
  .ptabs button { width: 26px; height: 21px; padding-left: 4px; background: linear-gradient(#c9cbdb, #afb1c6); border: 1px solid #9193a8; border-bottom: 0; border-radius: 3px 3px 0 0; }
  .ptabs .on { background: #eceef4; }
  .ptabs .more { margin-left: auto; width: auto; background: none; border: 0; padding: 0 0 4px; font: 18px/16px "Liberation Sans", sans-serif; color: #444; }
  .filter { display: flex; align-items: center; height: 19px; margin: 1px 0 0 1px; padding-left: 6px; border: 1px solid #6f7184; border-radius: 10px; background: linear-gradient(#e4e6ee, #fff 60%); }
  .filter .icon { width: 13px; height: 13px; }
  .root { display: flex; align-items: center; gap: 5px; height: 20px; margin-top: 1px; padding-left: 2px; overflow: hidden; }
  ul { list-style: none; margin: -1px 0 0; padding: 0; }
  li { display: flex; align-items: center; height: 18px; padding-left: 10px; }
  .stem { width: 11px; height: 18px; border-left: 1px dotted #777; display: grid; align-items: center; background: linear-gradient(90deg, #888 50%, transparent 50%) 0 9px / 2px 1px repeat-x; }
  li:last-child .stem { height: 10px; align-self: flex-start; }
  .plus { width: 9px; height: 9px; margin-left: -5px; border: 1px solid #8a8a92; background: linear-gradient(#26264a, #26264a) center / 5px 1px no-repeat, linear-gradient(#26264a, #26264a) center / 1px 5px no-repeat, #fff; }
  .txt { margin-left: 4px; padding: 0 1px; line-height: 15px; }
  .sel { background: #3399f4; color: #fff; }
  .rollback { height: 3px; background: #2f6bc4; border-bottom: 1px solid #4b5f86; }
  .scroll { margin-top: auto; height: 17px; display: flex; align-items: center; background: #eeeff2; padding: 0 4px; margin-bottom: 1px; }
  .thumb { width: 105px; height: 15px; margin-left: 9px; display: flex; gap: 1px; justify-content: center; align-items: center; border: 1px solid #8f9096; border-radius: 2px; background: linear-gradient(#f6f6f8, #e4e5e8 50%, #cdced3); }
  .thumb i { width: 2px; height: 7px; background: #77787e; }
  .arr { border: 3px solid transparent; }
  .arr.l { border-right: 4px solid #222; border-left: 0; }
  .arr.r { border-left: 4px solid #222; border-right: 0; margin-left: auto; }
  .handle { position: absolute; right: -10px; top: 324px; width: 10px; height: 29px; flex-direction: column; justify-content: space-around; background: #d2d4e2; border: 1px solid #62647a; border-left: 0; border-radius: 0 4px 4px 0; }
  .handle i { border: 3px solid transparent; border-right: 4px solid #3a3a78; border-left: 0; }

  .sheets { display: flex; padding-left: 2px; gap: 1px; font: 12px/13px "Liberation Sans", sans-serif; }
  .nav { width: 15px; height: 14px; background: #b7b9cb; border: 1px solid #9092a8; }
  .nav svg { width: 13px; height: 12px; }
  .sheet { height: 14px; padding: 0 14px 0 8px; background: #b9bbd0; border: solid #44455a; border-width: 0 1px 1px 0; margin-left: -1px; }
  .sheet.on { font-weight: bold; margin-left: 2px; padding: 0 10px; background: #dcdfe9; border-left: 1px solid #44455a; }

  footer { display: flex; align-items: center; background: linear-gradient(#d8daea, #b9bbd2); border-top: 1px solid #55566a; border-bottom: 2px solid #4c4d58; font-family: "Noto Sans", sans-serif; }
  .doc { flex: 1; padding-left: 2px; }
  .cell { border: solid #e6e7f0; border-width: 0 1px; padding: 1px 4px; height: 15px; }
  .gap { width: 9px; margin: 0 11px 0 7px; }
  .qh { margin-right: 49px; }
  .tg { margin-right: 14px; }
  .qh .icon { width: 13px; height: 13px; }
</style>
